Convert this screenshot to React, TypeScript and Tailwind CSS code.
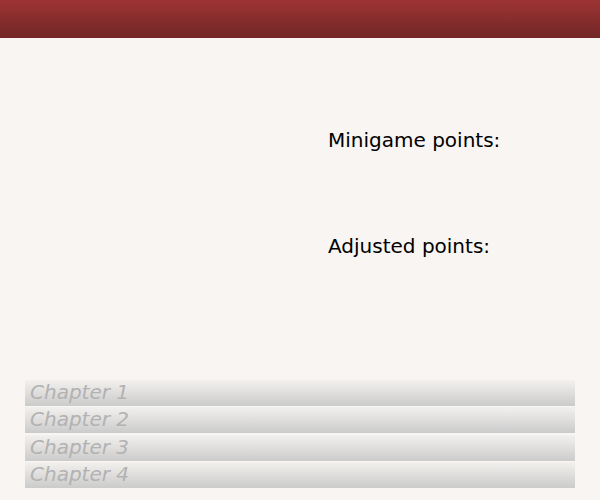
export default function App() {
  const chapters = ["Chapter 1", "Chapter 2", "Chapter 3", "Chapter 4"];
  return (
    <div className="w-[600px] h-[500px] bg-[#f8f5f2] flex flex-col font-['DejaVu_Sans',sans-serif] overflow-hidden">
      <header className="h-[38px] bg-gradient-to-b from-[#9e3434] to-[#722626]" />
      <div className="flex h-[342px]">
        <div className="w-[328px]" />
        <div className="flex flex-col pt-[88px] text-[20px] leading-[28px] text-black">
          <p>Minigame points:</p>
          <p className="mt-[78px]">Adjusted points:</p>
        </div>
      </div>
      <div className="flex flex-col gap-[1.33px] px-[25px]">
        {chapters.map((c) => (
          <div
            key={c}
            className="h-[26px] flex items-center pl-[5px] pb-[2px] bg-gradient-to-b from-[#f3f1ee] to-[#cbcbcb] text-[20px] italic text-[#b2b2b2]"
          >
            {c}
          </div>
        ))}
      </div>
    </div>
  );
}
